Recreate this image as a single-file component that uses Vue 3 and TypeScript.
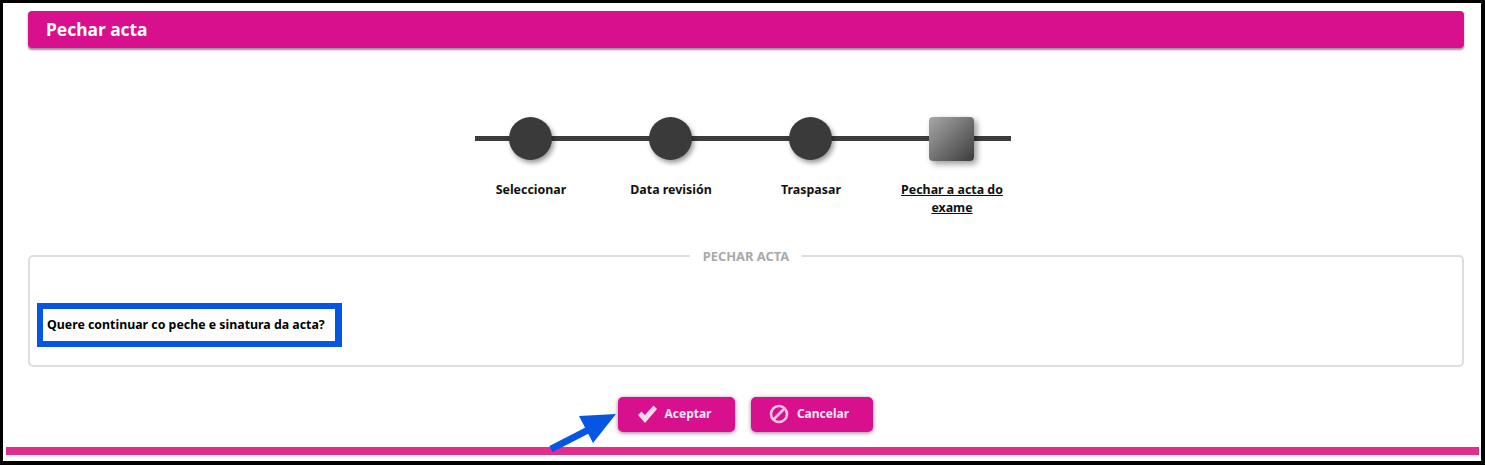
<script setup lang="ts">
interface Step {
  label: string;
  current?: boolean;
}

const steps: Step[] = [
  { label: 'Seleccionar' },
  { label: 'Data revisión' },
  { label: 'Traspasar' },
  { label: 'Pechar a acta do exame', current: true },
];
</script>

<template>
  <div class="page">
    <div class="content">
      <h1 class="title-bar">Pechar acta</h1>

      <div class="stepper">
        <div class="stepper-line"></div>
        <div v-for="step in steps" :key="step.label" class="step" :class="{ current: step.current }">
          <div class="marker"></div>
          <div class="label">{{ step.label }}</div>
        </div>
      </div>

      <fieldset class="panel">
        <legend>PECHAR ACTA</legend>
        <div class="question">Quere continuar co peche e sinatura da acta?</div>
      </fieldset>

      <div class="actions">
        <button class="btn">
          <svg class="icon" viewBox="0 0 20 20">
            <path d="M1 11 L4.5 7.5 L8 11 L16.5 1.5 L20 5 L8 19 Z" fill="#f3dbe9" />
          </svg>
          Aceptar
        </button>
        <button class="btn cancel">
          <svg class="icon" viewBox="0 0 20 20">
            <circle cx="10" cy="10" r="8" fill="none" stroke="#f3c4df" stroke-width="2.6" />
            <path d="M4.5 15.5 L15.5 4.5" stroke="#f3c4df" stroke-width="2.6" />
          </svg>
          Cancelar
        </button>
        <svg class="arrow" viewBox="0 0 72 42">
          <path d="M5 39 L42 20" stroke="#0557e3" stroke-width="7" fill="none" />
          <path d="M70 4 L33 6 L47 33 Z" fill="#0557e3" />
        </svg>
      </div>
    </div>
    <div class="footer-bar"></div>
  </div>
</template>

<style scoped>
.page {
  box-sizing: border-box;
  width: 1485px;
  height: 465px;
  border: solid #000;
  border-width: 3px 4px 4px 3px;
  background: #fff;
  display: flex;
  flex-direction: column;
  overflow: hidden;
  font-family: "Noto Sans", sans-serif;
  position: relative;
}

.content {
  flex: 1;
  padding: 8px 17px 0 25px;
}

.title-bar {
  margin: 0;
  height: 37px;
  line-height: 37px;
  padding-left: 18px;
  background: #d8108d;
  color: #fff;
  font-size: 17.4px;
  font-weight: 700;
  border-radius: 4px;
  box-shadow: 0 2px 2px rgba(90, 40, 80, 0.55);
}

.stepper {
  position: relative;
  display: flex;
  width: 560px;
  margin: 69px 0 0 433px;
}

.stepper-line {
  position: absolute;
  left: 14px;
  right: 10px;
  top: 19px;
  height: 5px;
  background: #3c3c3c;
}

.step {
  position: relative;
  width: 140px;
  display: flex;
  flex-direction: column;
  align-items: center;
  text-align: center;
}

.marker {
  width: 43px;
  height: 43px;
  margin-right: 2px;
  border-radius: 50%;
  background: #3a3a3a;
  box-shadow: 2px 3px 5px rgba(0, 0, 0, 0.4);
}

.step.current .marker {
  width: 45px;
  height: 44px;
  margin-right: 0;
  border-radius: 4px;
  background: linear-gradient(135deg, #a8a8a8, #3c3c3c);
  box-shadow: 3px 3px 6px rgba(0, 0, 0, 0.4);
}

.label {
  margin-top: 21px;
  width: 110px;
  font-size: 12.4px;
  line-height: 18px;
  font-weight: 700;
  color: #111;
}

.step.current .label {
  text-decoration: underline;
  margin-top: 20px;
  margin-left: 2px;
}

.panel {
  box-sizing: border-box;
  height: 119px;
  margin: 31px 0 0;
  padding: 0;
  border: 2px solid #dedede;
  border-radius: 5px;
}

.panel legend {
  margin: 0 auto;
  padding: 0 13px;
  font-size: 12.9px;
  line-height: 16px;
  font-weight: 700;
  color: #a9a9a9;
}

.question {
  box-sizing: border-box;
  width: 305px;
  height: 44px;
  margin: 39px 0 0 7px;
  padding-left: 4px;
  border: 6px solid #0557e3;
  border-right-width: 7px;
  font-size: 12.35px;
  line-height: 32px;
  font-weight: 700;
  color: #000;
  white-space: nowrap;
}

.actions {
  position: relative;
  display: flex;
  justify-content: center;
  gap: 16px;
  margin: 30px 0 0 0;
  padding-right: 1px;
}

.btn {
  display: flex;
  align-items: center;
  justify-content: center;
  gap: 7px;
  width: 117px;
  height: 35px;
  padding: 0 4px 2px 0;
  border: none;
  border-radius: 5px;
  background: #d8108d;
  color: #f8e6f1;
  font-family: inherit;
  font-size: 12px;
  font-weight: 700;
  box-shadow: 0 1px 4px rgba(90, 40, 80, 0.6);
}

.btn.cancel {
  width: 122px;
  gap: 8px;
  padding-right: 6px;
}

.icon {
  width: 20px;
  height: 20px;
}

.arrow {
  position: absolute;
  left: 518px;
  top: 13px;
  width: 72px;
  height: 42px;
  z-index: 2;
}

.footer-bar {
  height: 8px;
  margin: 0 2px 6px 3px;
  background: #e22c8e;
}
</style>

<style>
html, body {
  margin: 0;
  background: #fff;
}
</style>
